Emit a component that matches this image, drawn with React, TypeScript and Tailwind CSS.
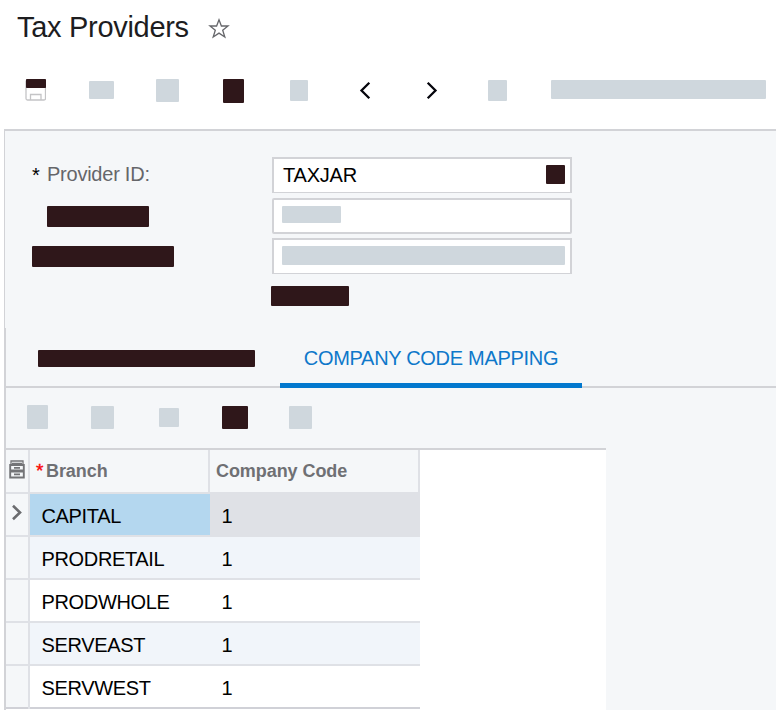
import React from "react";

type BlockProps = { className: string };

const DarkBlock = ({ className }: BlockProps) => (
  <div className={`shrink-0 rounded-[1px] bg-[#2f171a] ${className}`} />
);

const PaleBlock = ({ className }: BlockProps) => (
  <div className={`shrink-0 rounded-[1px] bg-[#cfd7dd] ${className}`} />
);

const rows = [
  { branch: "CAPITAL", code: "1" },
  { branch: "PRODRETAIL", code: "1" },
  { branch: "PRODWHOLE", code: "1" },
  { branch: "SERVEAST", code: "1" },
  { branch: "SERVWEST", code: "1" },
];

function Header() {
  return (
    <header className="flex h-[60px] items-start pl-[17px]">
      <h1 className="mt-[10px] w-[191px] whitespace-nowrap text-[29px] leading-[34px] tracking-[-0.3px] text-[#1d1d1f]">
        Tax Providers
      </h1>
      <svg className="mt-[18px]" width="22" height="22" viewBox="0 0 22 22" fill="none" stroke="#66676b" strokeWidth="1.3">
        <path d="M11 1.8 L13.4 8 H20 L14.7 12.2 L16.8 19 L11 15.1 L5.2 19 L7.3 12.2 L2 8 H8.6 Z" />
      </svg>
    </header>
  );
}

function Toolbar() {
  return (
    <div className="flex h-[69px] items-start">
      <svg className="ml-[25px] mt-[19px] shrink-0" width="21" height="22" viewBox="0 0 21 22" fill="none">
        <path d="M1 1.5V19.5Q1 21 2.5 21H19Q20.5 21 20.5 19.5V1.5M5.5 21V15.5H16V21" stroke="#c4c4c6" strokeWidth="1.3" />
        <rect x="1" width="20" height="9" rx="0.7" fill="#2f171a" />
      </svg>
      <PaleBlock className="ml-[43px] mt-[21px] h-[18px] w-[25px]" />
      <PaleBlock className="ml-[42px] mt-[19px] h-[23px] w-[23px]" />
      <DarkBlock className="ml-[44px] mt-[19px] h-6 w-[21px]" />
      <PaleBlock className="ml-[46px] mt-[20px] h-[21px] w-[18px]" />
      <svg className="ml-[50px] mt-[20px] shrink-0" width="14" height="21" viewBox="0 0 14 21" fill="none" stroke="#05050c" strokeWidth="2.3">
        <path d="M11.3 2.7 L3.5 10.5 L11.3 18.3" />
      </svg>
      <svg className="ml-[53px] mt-[20px] shrink-0" width="14" height="21" viewBox="0 0 14 21" fill="none" stroke="#05050c" strokeWidth="2.3">
        <path d="M2.7 2.7 L10.5 10.5 L2.7 18.3" />
      </svg>
      <PaleBlock className="ml-[49px] mt-[20px] h-[21px] w-[19px]" />
      <PaleBlock className="ml-[44px] mt-[20px] h-[19px] w-[215px]" />
    </div>
  );
}

function ProviderForm() {
  return (
    <section className="flex h-[199px] border-l border-t-2 border-[#d2d3d7]">
      <div className="w-[267px] shrink-0 pl-[27px]">
        <div className="flex h-[75px] items-start pt-[31px] text-[20px] leading-[25px]">
          <span className="w-[15px] text-[20px] leading-[27px] text-black">*</span>
          <span className="whitespace-nowrap tracking-[-0.24px] text-[#65666a]">Provider ID:</span>
        </div>
        <DarkBlock className="ml-[15px] h-[21px] w-[102px]" />
        <DarkBlock className="mt-[19px] h-[21px] w-[142px]" />
      </div>
      <div className="w-[300px] shrink-0 pt-[26px]">
        <div className="flex h-9 items-start justify-between border-2 border-b border-[#d2d3d7] bg-white pl-[9px] pr-[5px]">
          <span className="mt-[4px] text-[20px] leading-[25px] tracking-[-0.2px] text-black">TAXJAR</span>
          <DarkBlock className="mt-[6px] h-[19px] w-[19px]" />
        </div>
        <div className="mt-[5px] h-9 rounded-[2px] border-2 border-[#d2d3d7] bg-white pl-2 pt-[6px]">
          <PaleBlock className="h-[17px] w-[59px]" />
        </div>
        <div className="mt-1 h-9 border-2 border-b border-[#d2d3d7] bg-white pl-2 pt-[6px]">
          <PaleBlock className="h-[19px] w-[283px]" />
        </div>
        <DarkBlock className="-ml-px mt-3 h-5 w-[78px]" />
      </div>
    </section>
  );
}

function Tabs() {
  return (
    <nav className="flex h-[60px] bg-[linear-gradient(to_top,#d2d3d7_2px,transparent_2px)]">
      <DarkBlock className="ml-8 mt-[22px] h-[17px] w-[217px]" />
      <div className="ml-[25px] flex h-[60px] w-[302px] justify-center border-b-5 border-[#0278ce]">
        <span className="mt-[18px] whitespace-nowrap text-[20px] leading-[25px] tracking-[-0.3px] text-[#0e78ca]">
          COMPANY CODE MAPPING
        </span>
      </div>
    </nav>
  );
}

function GridToolbar() {
  return (
    <div className="flex h-[62px] w-[600px] items-start border-b-2 border-[#d2d3d7]">
      <PaleBlock className="ml-[21px] mt-[17px] h-6 w-[21px]" />
      <PaleBlock className="ml-[43px] mt-[18px] h-[23px] w-[23px]" />
      <PaleBlock className="ml-[45px] mt-[20px] h-[19px] w-[20px]" />
      <DarkBlock className="ml-[43px] mt-[18px] h-[23px] w-[26px]" />
      <PaleBlock className="ml-[41px] mt-[18px] h-[23px] w-[23px]" />
    </div>
  );
}

function CabinetIcon() {
  return (
    <svg className="ml-[3px] mt-[10px]" width="16" height="19" viewBox="0 0 16 19" fill="none" stroke="#737477">
      <path d="M2 4V1H14V4M3 3.5H13" strokeWidth="1.3" />
      <path d="M1.2 5H14.8V10.5H1.2ZM1.2 11.5H14.8V17.5H1.2Z" strokeWidth="1.9" />
      <path d="M5 7.8H11M5 14.4H11" strokeWidth="1.7" />
    </svg>
  );
}

function BranchGrid() {
  return (
    <div className="h-[260px] w-[600px] bg-white">
      <div className="flex h-11 w-[414px] border-b-2 border-[#dfe1e6] bg-[#f5f7f9] text-[18px] font-bold leading-[22px] tracking-[-0.07px] text-[#6f7074]">
        <div className="w-6 shrink-0 border-r-2 border-[#dfe1e6]">
          <CabinetIcon />
        </div>
        <div className="flex w-[180px] shrink-0 border-r-2 border-[#dfe1e6] pl-[6px] pt-[10px]">
          <span className="w-[10px] text-[19px] font-normal text-[#fb0505] [-webkit-text-stroke:0.4px_#fb0505]">*</span>
          <span>Branch</span>
        </div>
        <div className="w-[210px] border-r-2 border-[#dfe1e6] pl-[6px] pt-[10px]">Company Code</div>
      </div>
      {rows.map((row, index) => {
        const selected = index === 0;
        const last = index === rows.length - 1;
        const line = last ? "border-[#d0d1d7]" : "border-[#dfe1e6]";
        const fill = index % 2 ? "bg-[#f1f5fa]" : "bg-white";
        return (
          <div key={row.branch} className="flex h-[43px] w-[414px] text-[20px] leading-[25px] text-black">
            <div className="flex w-6 shrink-0 border-r-2 border-[#dfe1e6]">
              <div className={`w-full border-b-2 bg-[#f5f7f9] ${line}`}>
                {selected && (
                  <svg className="ml-[5px] mt-[10px]" width="12" height="17" viewBox="0 0 12 17" fill="none" stroke="#6b6c6f" strokeWidth="2.6">
                    <path d="M2 1.8 L9 8.5 L2 15.2" />
                  </svg>
                )}
              </div>
            </div>
            <div className={`w-[180px] shrink-0 border-b-2 pl-[11.5px] pt-[10px] tracking-[-0.35px] ${line} ${selected ? "bg-[#b4d7ef]" : fill}`}>
              {row.branch}
            </div>
            <div className={`w-[210px] border-b-2 pl-[11.5px] pt-[10px] ${line} ${selected ? "bg-[#dfe1e6]" : fill}`}>
              {row.code}
            </div>
          </div>
        );
      })}
    </div>
  );
}

export default function App() {
  return (
    <main className="h-[710px] w-[776px] overflow-hidden bg-white font-['Liberation_Sans',Arial,sans-serif]">
      <Header />
      <Toolbar />
      <div className="ml-1 bg-[#f5f7f9]">
        <ProviderForm />
        <section className="h-[382px] border-l-2 border-[#d2d3d7]">
          <Tabs />
          <GridToolbar />
          <BranchGrid />
        </section>
      </div>
    </main>
  );
}
